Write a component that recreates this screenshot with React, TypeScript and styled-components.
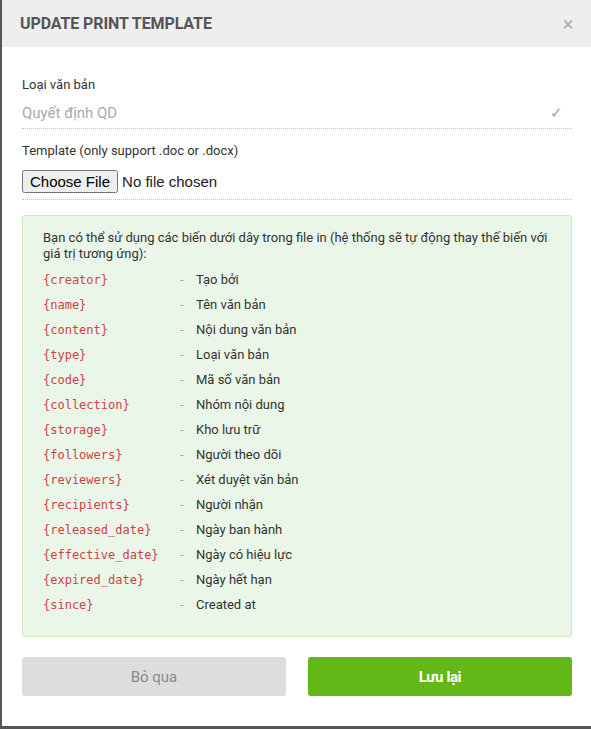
import React from "react";
import styled, { createGlobalStyle } from "styled-components";

const GlobalStyle = createGlobalStyle`
  html, body {
    margin: 0;
    padding: 0;
    overflow: hidden;
    background: #565656;
    font-family: Roboto, "Liberation Sans", sans-serif;
  }
`;

const variables = [
  { code: "{creator}", label: "Tạo bởi" },
  { code: "{name}", label: "Tên văn bản" },
  { code: "{content}", label: "Nội dung văn bản" },
  { code: "{type}", label: "Loại văn bản" },
  { code: "{code}", label: "Mã số văn bản" },
  { code: "{collection}", label: "Nhóm nội dung" },
  { code: "{storage}", label: "Kho lưu trữ" },
  { code: "{followers}", label: "Người theo dõi" },
  { code: "{reviewers}", label: "Xét duyệt văn bản" },
  { code: "{recipients}", label: "Người nhận" },
  { code: "{released_date}", label: "Ngày ban hành" },
  { code: "{effective_date}", label: "Ngày có hiệu lực" },
  { code: "{expired_date}", label: "Ngày hết hạn" },
  { code: "{since}", label: "Created at" },
];

const Overlay = styled.div`
  height: 729px;
  padding-left: 2px;
`;

const Modal = styled.div`
  width: 600px;
  height: 726px;
  background: #fff;
  display: flex;
  flex-direction: column;
`;

const Header = styled.div`
  height: 47px;
  flex-shrink: 0;
  display: flex;
  align-items: center;
  justify-content: space-between;
  padding: 0 20px 0 18px;
  background: #eeeeee;
`;

const Title = styled.h4`
  margin: 0;
  font-size: 16px;
  font-weight: 700;
  color: #555;
  letter-spacing: -0.1px;
`;

const Close = styled.span`
  width: 20px;
  margin-right: 4px;
  font-size: 20px;
  line-height: 1;
  color: #b0b0b0;
  text-align: center;
`;

const Body = styled.div`
  padding: 30px 20px 0;
  width: 550px;
`;

const Label = styled.div`
  font-size: 13px;
  line-height: 16px;
  color: #333;
`;

const SelectRow = styled.div`
  display: flex;
  align-items: center;
  justify-content: space-between;
  height: 31px;
  padding-top: 4px;
  border-bottom: 1px dotted #c4c4c4;
  margin-bottom: 14px;
`;

const SelectValue = styled.span`
  font-size: 15px;
  color: #a9a9a9;
`;

const Check = styled.span`
  margin-right: 9px;
  font-size: 15px;
  color: #a0a0a0;
`;

const FileRow = styled.div`
  padding: 11px 0 6px;
  border-bottom: 1px dotted #c4c4c4;
  margin-bottom: 15px;

  input {
    font-family: "Liberation Sans", Arial, sans-serif;
    font-size: 15px;
    color: #222;
  }
`;

const InfoBox = styled.div`
  background: #eaf6e7;
  border: 1px solid #cbe9c3;
  border-radius: 3px;
  padding: 14px 20px 20px;
  height: 386px;
`;

const Intro = styled.p`
  margin: 0 0 5px;
  font-size: 13px;
  line-height: 16px;
  color: #333;
`;

const VarRow = styled.div`
  display: grid;
  grid-template-columns: 137px 16px 1fr;
  height: 25px;
  align-items: center;
`;

const Code = styled.code`
  font-family: "DejaVu Sans Mono", "Liberation Mono", monospace;
  font-size: 12px;
  color: #cf4149;
`;

const Dash = styled.span`
  font-size: 13px;
  color: #aaa;
`;

const Desc = styled.span`
  font-size: 13px;
  color: #333;
`;

const Footer = styled.div`
  display: grid;
  grid-template-columns: 1fr 1fr;
  gap: 22px;
  margin-top: 20px;
`;

const Button = styled.button<{ $primary?: boolean }>`
  height: 39px;
  border: none;
  border-radius: 3px;
  font-family: Roboto, sans-serif;
  font-size: 15px;
  font-weight: ${p => (p.$primary ? 700 : 400)};
  letter-spacing: ${p => (p.$primary ? "-0.4px" : "0")};
  background: ${p => (p.$primary ? "#63b716" : "#dddddd")};
  color: ${p => (p.$primary ? "#fff" : "#8a8a8a")};
  cursor: pointer;
`;

const App = () => (
  <>
    <GlobalStyle />
    <Overlay>
      <Modal>
        <Header>
          <Title>UPDATE PRINT TEMPLATE</Title>
          <Close>×</Close>
        </Header>
        <Body>
          <Label>Loại văn bản</Label>
          <SelectRow>
            <SelectValue>Quyết định QD</SelectValue>
            <Check>✓</Check>
          </SelectRow>
          <Label>Template (only support .doc or .docx)</Label>
          <FileRow>
            <input type="file" />
          </FileRow>
          <InfoBox>
            <Intro>
              Bạn có thể sử dụng các biến dưới dây trong file in (hệ thống sẽ tự động thay thế biến với
              giá trị tương ứng):
            </Intro>
            {variables.map(v => (
              <VarRow key={v.code}>
                <Code>{v.code}</Code>
                <Dash>-</Dash>
                <Desc>{v.label}</Desc>
              </VarRow>
            ))}
          </InfoBox>
          <Footer>
            <Button>Bỏ qua</Button>
            <Button $primary>Lưu lại</Button>
          </Footer>
        </Body>
      </Modal>
    </Overlay>
  </>
);

export default App;
